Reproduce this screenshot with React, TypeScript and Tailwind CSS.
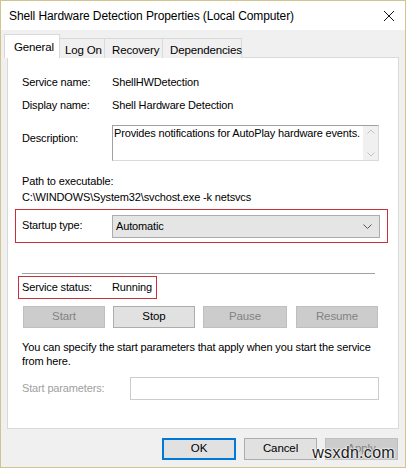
import React from "react";

const FONT = { fontFamily: '"Liberation Sans", Arial, sans-serif' };

// Plain Win10-style push button
function Btn({
  label,
  width,
  disabled,
  primary,
}: {
  label: string;
  width: string;
  disabled?: boolean;
  primary?: boolean;
}) {
  const base = "h-[22px] flex items-center justify-center text-[11.5px] tracking-[-0.1px] border box-border";
  const tone = disabled
    ? "bg-[#cccccc] border-[#bfbfbf] text-[#838383]"
    : primary
    ? "bg-[#e1e1e1] border-[#0078d7] border-2 text-black"
    : "bg-[#e1e1e1] border-[#adadad] text-black";
  return <div className={`${base} ${tone} ${width}`}>{label}</div>;
}

function Row({ label, value }: { label: string; value: string }) {
  return (
    <div className="flex h-[16px] items-center leading-[16px]">
      <span className="w-[90px] text-black">{label}</span>
      <span className="text-black">{value}</span>
    </div>
  );
}

export default function App() {
  return (
    <div
      className="relative w-[406px] h-[468px] border border-[#d3c48f] bg-[#f0f0f0] flex flex-col box-border overflow-hidden"
      style={FONT}
    >
      {/* title bar */}
      <div className="h-[29px] bg-white flex items-center justify-between pl-[8px] pr-[10px]">
        <span className="text-[12px] tracking-[-0.1px] text-black">Shell Hardware Detection Properties (Local Computer)</span>
        <svg width="12" height="12" viewBox="0 0 12 12">
          <path d="M1 1 L11 11 M11 1 L1 11" stroke="#111" strokeWidth="1" />
        </svg>
      </div>

      {/* tab strip */}
      <div className="flex items-end h-[28px] pl-[3px] relative z-10 text-[11.5px] tracking-[-0.15px]">
        <div className="h-[24px] w-[56px] bg-white border border-b-0 border-[#d9d9d9] pl-[9px] pt-[4px]">
          General
        </div>
        <div className="h-[20px] w-[45px] bg-[#f0f0f0] border border-l-0 border-b-0 border-[#d9d9d9] pl-[5px] pt-[3px]">
          Log On
        </div>
        <div className="h-[20px] w-[58px] bg-[#f0f0f0] border border-l-0 border-b-0 border-[#d9d9d9] pl-[7px] pt-[3px]">
          Recovery
        </div>
        <div className="h-[20px] w-[79px] bg-[#f0f0f0] border border-l-0 border-b-0 border-[#d9d9d9] pl-[7px] pt-[3px]">
          Dependencies
        </div>
      </div>

      {/* General page */}
      <div className="mx-[6px] -mt-px h-[372px] bg-white border border-[#d9d9d9] flex flex-col pl-[14px] text-[11px] tracking-[-0.15px]">
        <div className="mt-[16px]">
          <Row label="Service name:" value="ShellHWDetection" />
        </div>
        <div className="mt-[7px]">
          <Row label="Display name:" value="Shell Hardware Detection" />
        </div>

        <div className="mt-[12px] flex">
          <span className="w-[90px] pt-[5px]">Description:</span>
          <div className="w-[267px] h-[36px] border border-[#a0a0a0] border-r-[#dadada] border-b-[#dadada] flex">
            <div className="flex-1 pl-[1px] leading-[14px] whitespace-nowrap">Provides notifications for AutoPlay hardware events.</div>
            <div className="w-[15px] bg-[#f0f0f0] flex flex-col items-center justify-between py-[3px]">
              <svg width="8" height="5" viewBox="0 0 8 5">
                <path d="M0.5 4.5 L4 1 L7.5 4.5" stroke="#c2c2c2" fill="none" />
              </svg>
              <svg width="8" height="5" viewBox="0 0 8 5">
                <path d="M0.5 0.5 L4 4 L7.5 0.5" stroke="#c2c2c2" fill="none" />
              </svg>
            </div>
          </div>
        </div>

        <div className="mt-[12px] leading-[16px]">Path to executable:</div>
        <div className="leading-[16px]">C:\WINDOWS\System32\svchost.exe -k netsvcs</div>

        {/* startup type */}
        <div className="mt-[4px] -ml-[7px] w-[373px] h-[34px] border border-[#c9303a] flex items-center pl-[6px]">
          <span className="w-[90px] -mt-[2px]">Startup type:</span>
          <div className="w-[268px] h-[23px] bg-[#e5e5e5] border border-[#acacac] flex items-center justify-between pl-[3px] pr-[7px]">
            <span>Automatic</span>
            <svg width="9" height="5" viewBox="0 0 9 5">
              <path d="M0.5 0.5 L4.5 4.5 L8.5 0.5" stroke="#555" fill="none" />
            </svg>
          </div>
        </div>

        <div className="mt-[30px] w-[353px] h-px bg-[#a0a0a0]" />

        {/* service status */}
        <div className="mt-[2px] -ml-[4px] w-[139px] h-[23px] border border-[#c9303a] flex items-center pl-[3px]">
          <span className="w-[90px]">Service status:</span>
          <span>Running</span>
        </div>

        <div className="mt-[7px] flex ml-px">
          <Btn label="Start" width="w-[82px]" disabled />
          <div className="ml-[8px]">
            <Btn label="Stop" width="w-[82px]" />
          </div>
          <div className="ml-[8px]">
            <Btn label="Pause" width="w-[84px]" disabled />
          </div>
          <div className="ml-[9px]">
            <Btn label="Resume" width="w-[82px]" disabled />
          </div>
        </div>

        <p className="mt-[12px] leading-[14px] w-[360px]">
          You can specify the start parameters that apply when you start the service from here.
        </p>

        <div className="mt-[9px] flex items-center">
          <span className="w-[108px] text-[#a0a0a0]">Start parameters:</span>
          <div className="w-[249px] h-[23px] bg-white border border-[#cccccc]" />
        </div>
      </div>

      {/* dialog buttons */}
      <div className="mt-[9px] flex justify-end pr-[7px] gap-[8px]">
        <Btn label="OK" width="w-[74px]" primary />
        <Btn label="Cancel" width="w-[73px]" />
        <Btn label="Apply" width="w-[73px]" disabled />
      </div>

      <span
        className="absolute right-[10px] bottom-[2px] text-[16px] text-[#1a1a1a] tracking-[0.3px]"
        style={{ textShadow: "0 0 2px #fff, 0 0 2px #fff, 0 0 2px #fff" }}
      >
        wsxdn.com
      </span>
    </div>
  );
}
